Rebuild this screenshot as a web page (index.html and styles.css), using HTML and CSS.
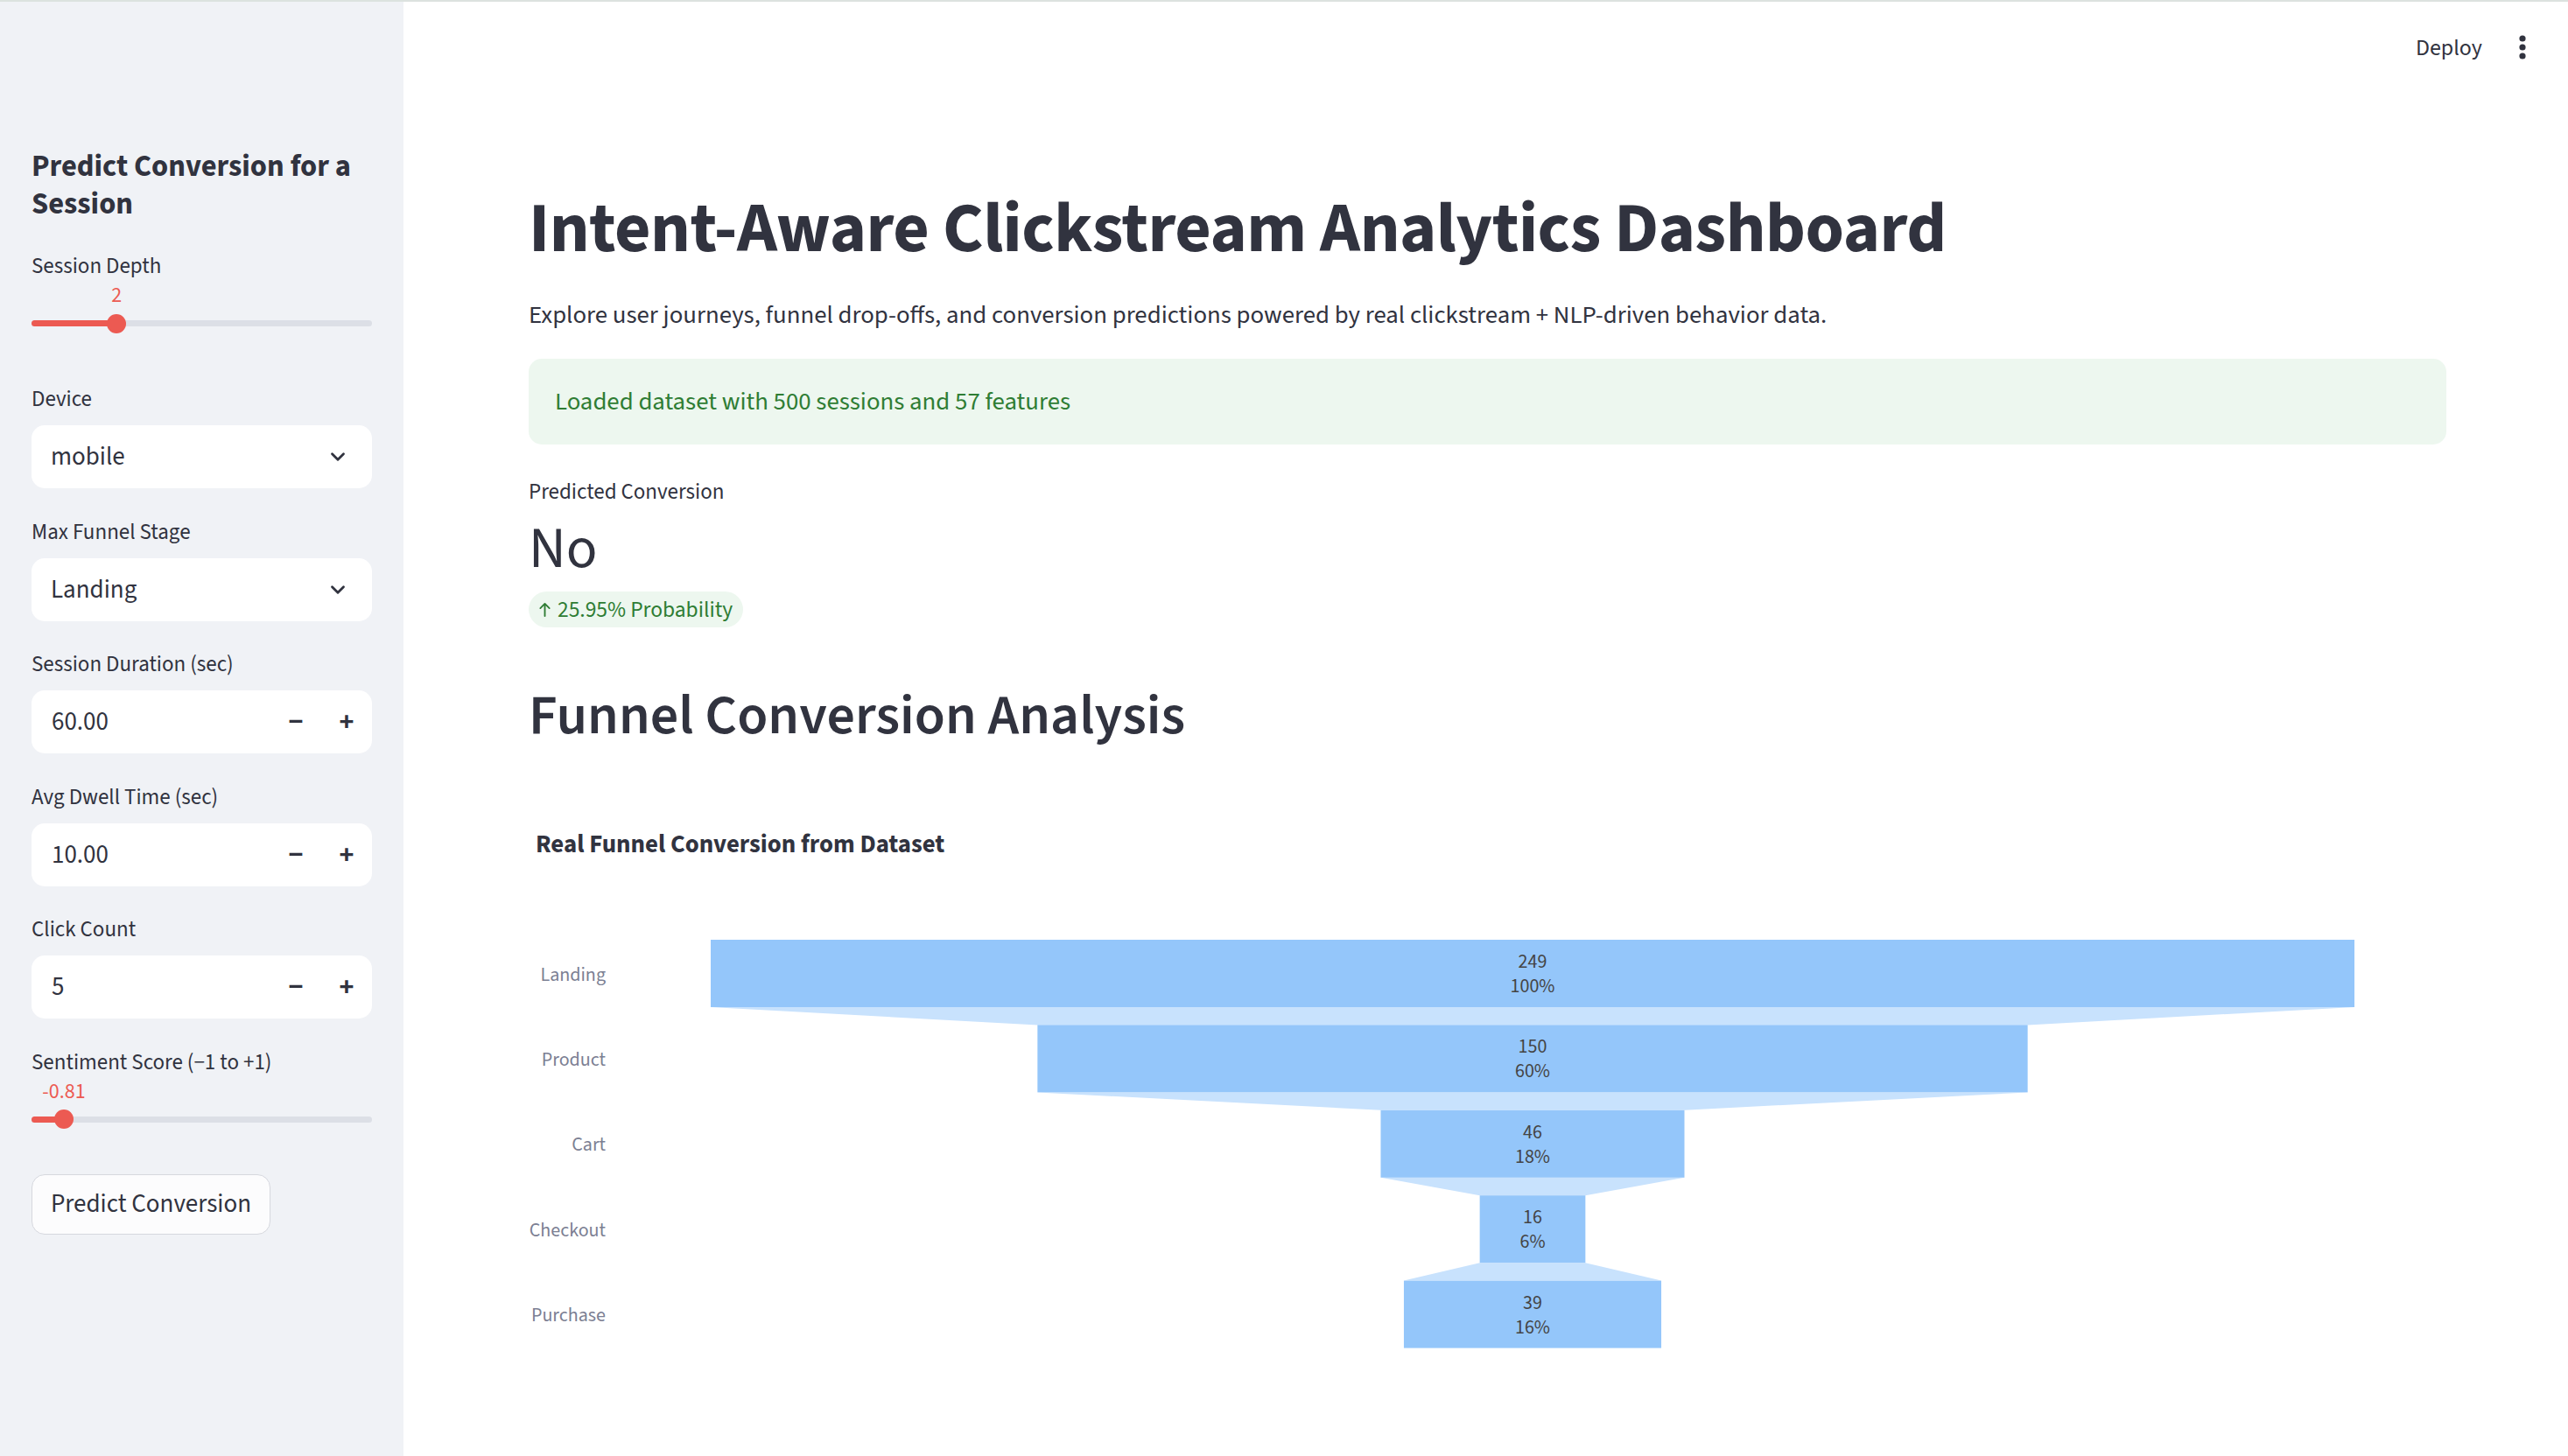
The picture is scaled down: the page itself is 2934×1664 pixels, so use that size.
FILE: index.html
```html
<!DOCTYPE html>
<html lang="en">
<head>
<meta charset="utf-8">
<title>Intent-Aware Clickstream Analytics Dashboard</title>
<link rel="stylesheet" href="styles.css">
</head>
<body>
<div class="topline"></div>
<div class="app">
  <aside class="sidebar">
    <h2 class="side-title">Predict Conversion for a Session</h2>
    <div class="widgets">
      <div class="field slider-field">
        <div class="lbl">Session Depth</div>
        <div class="slider">
          <div class="slider-value" style="left:25%">2</div>
          <div class="track"><div class="fill" style="width:25%"></div></div>
          <div class="thumb" style="left:25%"></div>
        </div>
      </div>
      <div class="field">
        <div class="lbl">Device</div>
        <div class="select"><span>mobile</span>
          <svg class="chev" viewBox="0 0 24 24" width="26" height="26"><path d="M6 9l6 6 6-6" fill="none" stroke="#31333f" stroke-width="2.6" stroke-linecap="round" stroke-linejoin="round"/></svg>
        </div>
      </div>
      <div class="field">
        <div class="lbl">Max Funnel Stage</div>
        <div class="select"><span>Landing</span>
          <svg class="chev" viewBox="0 0 24 24" width="26" height="26"><path d="M6 9l6 6 6-6" fill="none" stroke="#31333f" stroke-width="2.6" stroke-linecap="round" stroke-linejoin="round"/></svg>
        </div>
      </div>
      <div class="field">
        <div class="lbl">Session Duration (sec)</div>
        <div class="number"><span class="num-val">60.00</span><span class="step">&minus;</span><span class="step">+</span></div>
      </div>
      <div class="field">
        <div class="lbl">Avg Dwell Time (sec)</div>
        <div class="number"><span class="num-val">10.00</span><span class="step">&minus;</span><span class="step">+</span></div>
      </div>
      <div class="field">
        <div class="lbl">Click Count</div>
        <div class="number"><span class="num-val">5</span><span class="step">&minus;</span><span class="step">+</span></div>
      </div>
      <div class="field slider-field">
        <div class="lbl">Sentiment Score (&minus;1 to +1)</div>
        <div class="slider">
          <div class="slider-value" style="left:9.5%">-0.81</div>
          <div class="track"><div class="fill" style="width:9.5%"></div></div>
          <div class="thumb" style="left:9.5%"></div>
        </div>
      </div>
      <div class="field btn-field">
        <button class="btn">Predict Conversion</button>
      </div>
    </div>
  </aside>
  <main class="main">
    <header class="topbar">
      <span class="deploy">Deploy</span>
      <svg class="dots" viewBox="0 0 10 30" width="10" height="30"><circle cx="5" cy="5" r="3.6" fill="#31333f"/><circle cx="5" cy="15" r="3.6" fill="#31333f"/><circle cx="5" cy="25" r="3.6" fill="#31333f"/></svg>
    </header>
    <div class="content">
      <h1 class="title">Intent-Aware Clickstream Analytics Dashboard</h1>
      <p class="subtitle">Explore user journeys, funnel drop-offs, and conversion predictions powered by real clickstream + NLP-driven behavior data.</p>
      <div class="alert">Loaded dataset with 500 sessions and 57 features</div>
      <div class="metric">
        <div class="metric-label">Predicted Conversion</div>
        <div class="metric-value">No</div>
        <div class="metric-delta">
          <svg viewBox="0 0 16 20" width="15" height="19"><path d="M8 18V3M2.5 8.5L8 3l5.5 5.5" fill="none" stroke="#2f7d34" stroke-width="2" stroke-linecap="round" stroke-linejoin="round"/></svg>
          <span>25.95% Probability</span>
        </div>
      </div>
      <h2 class="section">Funnel Conversion Analysis</h2>
      <div class="chart">
        <svg class="funnel" viewBox="0 0 2191 700" width="2191" height="700">
          <text class="chart-title" x="8" y="67">Real Funnel Conversion from Dataset</text>
          <g class="connectors">
            <polygon points="208,253 2086,253 1712.65,273.4 581.35,273.4"/>
            <polygon points="581.35,350.4 1712.65,350.4 1320.5,370.8 973.5,370.8"/>
            <polygon points="973.5,447.8 1320.5,447.8 1207.35,468.2 1086.65,468.2"/>
            <polygon points="1086.65,545.2 1207.35,545.2 1294.05,565.6 999.95,565.6"/>
          </g>
          <g class="bars">
            <rect x="208" y="176" width="1878" height="77"/>
            <rect x="581.35" y="273.4" width="1131.3" height="77"/>
            <rect x="973.5" y="370.8" width="347" height="77"/>
            <rect x="1086.65" y="468.2" width="120.7" height="77"/>
            <rect x="999.95" y="565.6" width="294.1" height="77"/>
          </g>
          <g class="bar-text">
            <text x="1147" y="201">249</text><text x="1147" y="229">100%</text>
            <text x="1147" y="298.4">150</text><text x="1147" y="326.4">60%</text>
            <text x="1147" y="395.8">46</text><text x="1147" y="423.8">18%</text>
            <text x="1147" y="493.2">16</text><text x="1147" y="521.2">6%</text>
            <text x="1147" y="590.6">39</text><text x="1147" y="618.6">16%</text>
          </g>
          <g class="axis-text">
            <text x="88" y="215.5">Landing</text>
            <text x="88" y="312.9">Product</text>
            <text x="88" y="410.3">Cart</text>
            <text x="88" y="507.7">Checkout</text>
            <text x="88" y="605.1">Purchase</text>
          </g>
        </svg>
      </div>
    </div>
  </main>
</div>
</body>
</html>
```

FILE: styles.css
```css
* { box-sizing: border-box; }
html, body { margin: 0; padding: 0; }
body {
  width: 2934px;
  height: 1664px;
  overflow: hidden;
  background: #ffffff;
  color: #31333f;
  font-family: "Source Sans Pro", "Source Sans 3", Lato, "Noto Sans", sans-serif;
}
.topline { height: 2px; background: #dce2df; }
.app { display: flex; height: 1662px; }

/* Sidebar */
.sidebar {
  width: 461px;
  flex: none;
  background: #f0f2f6;
  padding: 167px 36px 0 36px;
}
.side-title {
  margin: 0;
  font-size: 34.5px;
  line-height: 43px;
  font-weight: 700;
  color: #31333f;
}
.widgets { display: flex; flex-direction: column; gap: 31.5px; margin-top: 31px; }
.field { display: flex; flex-direction: column; }
.lbl { font-size: 25px; line-height: 36px; height: 36px; margin-bottom: 12px; white-space: nowrap; }
.slider-field .lbl { margin-bottom: 0; }
.slider { position: relative; height: 84.5px; }
.slider-value {
  position: absolute; top: 0; transform: translateX(-50%);
  font-size: 24px; line-height: 32px; color: #ec5a52; white-space: nowrap;
}
.track {
  position: absolute; left: 0; right: 0; top: 44px; height: 7px;
  background: #dcdfe6; border-radius: 4px; overflow: hidden;
}
.fill { height: 100%; background: #ec5a52; }
.thumb {
  position: absolute; top: 36.5px; width: 22px; height: 22px; margin-left: -11px;
  border-radius: 50%; background: #ec5a52;
}
.select, .number {
  height: 72px; background: #ffffff; border-radius: 15px;
  display: flex; align-items: center; font-size: 29px;
}
.select { padding: 0 26px 0 22px; justify-content: space-between; }
.number { padding: 0 0 0 23px; }
.num-val { flex: 1; }
.step { width: 58px; text-align: center; font-size: 32px; font-weight: 700; }
.btn-field { margin-top: -6px; }
.btn {
  align-self: flex-start;
  width: 273px; height: 69px;
  background: #fcfcfd; border: 1.5px solid #d6d8de; border-radius: 15px;
  font-family: inherit; font-size: 29px; color: #31333f; padding: 0;
}

/* Main */
.main { flex: 1; display: flex; flex-direction: column; }
.topbar {
  height: 104px; display: flex; align-items: center; justify-content: flex-end;
  padding-right: 47px; gap: 41px;
}
.deploy { font-size: 26px; }
.content { padding: 0 139px 0 143px; display: flex; flex-direction: column; }
.title {
  margin: 107px 0 0 0; font-size: 80.3px; line-height: 98px; font-weight: 700;
  letter-spacing: -0.5px; white-space: nowrap;
}
.subtitle { margin: 27px 0 0 0; font-size: 28.8px; line-height: 45px; white-space: nowrap; }
.alert {
  margin-top: 27px; height: 98px; border-radius: 15px; background: #edf7ef;
  color: #2f7d34; font-size: 28.8px; display: flex; align-items: center; padding-left: 30px;
}
.metric { margin-top: 36px; display: flex; flex-direction: column; align-items: flex-start; }
.metric-label { font-size: 25px; line-height: 36px; }
.metric-value { font-size: 66px; line-height: 80px; margin-top: 7px; }
.metric-delta {
  margin-top: 9px; height: 41px; border-radius: 21px; background: #edf7ef;
  color: #2f7d34; font-size: 25.5px; display: flex; align-items: center; gap: 7px;
  padding: 0 12px 0 11px;
}
.metric-delta svg { display: block; }
.section { margin: 61px 0 0 0; font-size: 64px; line-height: 80px; font-weight: 600; white-space: nowrap; }
.chart { margin-top: 40px; }
.funnel { display: block; font-family: "Source Sans Pro", "Source Sans 3", Lato, "Noto Sans", sans-serif; }
.chart-title { font-size: 28.8px; font-weight: 700; fill: #31333f; dominant-baseline: central; }
.connectors polygon { fill: #c8e2fd; }
.bars rect { fill: #94c6fa; }
.bar-text text { font-size: 22px; fill: #444444; text-anchor: middle; dominant-baseline: central; }
.axis-text text { font-size: 22px; fill: #7c8093; text-anchor: end; dominant-baseline: central; }
```
